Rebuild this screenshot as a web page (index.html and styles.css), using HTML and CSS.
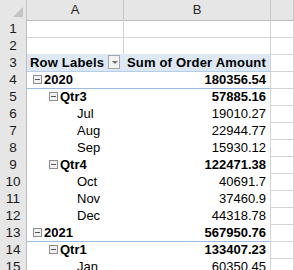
FILE: index.html
```html
<!DOCTYPE html>
<html lang="en">
<head>
    <meta charset="UTF-8">
    <title>Pivot Table</title>
    <link rel="stylesheet" href="styles.css">
</head>
<body>
    <div class="sheet">
        <div class="row col-head">
            <div class="corner"><span class="corner-mark"></span></div>
            <div class="colname">A</div>
            <div class="colname">B</div>
            <div class="colname"></div>
        </div>

        <div class="row"><div class="num">1</div><div class="cell a"></div><div class="cell b"></div><div class="cell c"></div></div>
        <div class="row"><div class="num">2</div><div class="cell a"></div><div class="cell b"></div><div class="cell c"></div></div>

        <div class="row pivot-head">
            <div class="num">3</div>
            <div class="cell a bold">Row Labels <span class="filter"></span></div>
            <div class="cell b bold right">Sum of Order Amount</div>
            <div class="cell c"></div>
        </div>

        <div class="row year">
            <div class="num">4</div>
            <div class="cell a bold lvl0"><span class="toggle"></span>2020</div>
            <div class="cell b bold right">180356.54</div>
            <div class="cell c"></div>
        </div>
        <div class="row pivot">
            <div class="num">5</div>
            <div class="cell a bold lvl1"><span class="toggle"></span>Qtr3</div>
            <div class="cell b bold right">57885.16</div>
            <div class="cell c"></div>
        </div>
        <div class="row pivot"><div class="num">6</div><div class="cell a lvl2">Jul</div><div class="cell b right">19010.27</div><div class="cell c"></div></div>
        <div class="row pivot"><div class="num">7</div><div class="cell a lvl2">Aug</div><div class="cell b right">22944.77</div><div class="cell c"></div></div>
        <div class="row pivot"><div class="num">8</div><div class="cell a lvl2">Sep</div><div class="cell b right">15930.12</div><div class="cell c"></div></div>
        <div class="row pivot">
            <div class="num">9</div>
            <div class="cell a bold lvl1"><span class="toggle"></span>Qtr4</div>
            <div class="cell b bold right">122471.38</div>
            <div class="cell c"></div>
        </div>
        <div class="row pivot"><div class="num">10</div><div class="cell a lvl2">Oct</div><div class="cell b right">40691.7</div><div class="cell c"></div></div>
        <div class="row pivot"><div class="num">11</div><div class="cell a lvl2">Nov</div><div class="cell b right">37460.9</div><div class="cell c"></div></div>
        <div class="row pivot"><div class="num">12</div><div class="cell a lvl2">Dec</div><div class="cell b right">44318.78</div><div class="cell c"></div></div>

        <div class="row year">
            <div class="num">13</div>
            <div class="cell a bold lvl0"><span class="toggle"></span>2021</div>
            <div class="cell b bold right">567950.76</div>
            <div class="cell c"></div>
        </div>
        <div class="row pivot">
            <div class="num">14</div>
            <div class="cell a bold lvl1"><span class="toggle"></span>Qtr1</div>
            <div class="cell b bold right">133407.23</div>
            <div class="cell c"></div>
        </div>
        <div class="row pivot"><div class="num">15</div><div class="cell a lvl2">Jan</div><div class="cell b right">60350.45</div><div class="cell c"></div></div>
    </div>
</body>
</html>
```

FILE: styles.css
```css
body {
    margin: 0;
    background-color: #fff;
    font-family: "Liberation Sans", Arial, sans-serif;
    color: #000;
    overflow: hidden;
}
.sheet {
    width: 294px;
}
.row {
    display: grid;
    grid-template-columns: 27px 97px 147px 23px;
    height: 17px;
}
.row > div {
    box-sizing: border-box;
    border-bottom: 1px solid #d4d4d4;
    border-right: 1px solid #d4d4d4;
}
/* column headers */
.col-head {
    height: 20px;
}
.col-head > div {
    background-color: #e6e6e6;
    border-right: 1px solid #c6c6c6;
    border-bottom: 1px solid #bdbdbd;
}
.corner {
    display: flex;
    align-items: flex-end;
    justify-content: flex-end;
    padding: 0 3px 3px 0;
}
.corner-mark {
    width: 0;
    height: 0;
    border-left: 10px solid transparent;
    border-bottom: 10px solid #c4c4c4;
}
.colname {
    font-size: 13px;
    color: #262626;
    text-align: center;
    line-height: 20px;
}
/* row numbers */
.num {
    background-color: #e6e6e6;
    border-right-color: #bdbdbd !important;
    border-bottom-color: #c6c6c6 !important;
    font-size: 13.5px;
    color: #1a1a1a;
    text-align: center;
    line-height: 17px;
}
.cell {
    display: flex;
    align-items: flex-end;
    font-size: 13px;
    line-height: 15px;
    padding: 0 4px 1px 3px;
    white-space: nowrap;
}
.bold {
    font-weight: bold;
}
.pivot-head .bold {
    letter-spacing: 0.2px;
}
.right {
    justify-content: flex-end;
}
/* pivot area */
.pivot-head .a, .pivot-head .b {
    background-color: #dde8f4;
    border-bottom-color: #b4cde9;
}
.pivot-head .a {
    border-right: none;
    padding-left: 3px;
}
.pivot .a, .year .a {
    border-right: none;
}
.pivot .a, .pivot .b {
    border-bottom-color: #fff;
}
.year .a, .year .b {
    border-bottom-color: #9cbde3;
}
.lvl0 {
    padding-left: 6px;
}
.lvl1 {
    padding-left: 22px;
}
.lvl2 {
    padding-left: 50px;
}
.toggle {
    position: relative;
    width: 7px;
    height: 7px;
    border: 1px solid #8e8e8e;
    background-color: #f0f0f0;
    margin: 0 2px 3px 0;
    flex-shrink: 0;
}
.toggle::after {
    content: "";
    position: absolute;
    left: 1px;
    right: 1px;
    top: 3px;
    height: 1px;
    background-color: #555;
}
.filter {
    position: relative;
    width: 12px;
    height: 12px;
    border: 1px solid #a6a6a6;
    background-color: #f3f3f3;
    margin: 0 0 1px 4px;
}
.filter::after {
    content: "";
    position: absolute;
    left: 3px;
    top: 5px;
    border-left: 3px solid transparent;
    border-right: 3px solid transparent;
    border-top: 3px solid #6f6f6f;
}
```
